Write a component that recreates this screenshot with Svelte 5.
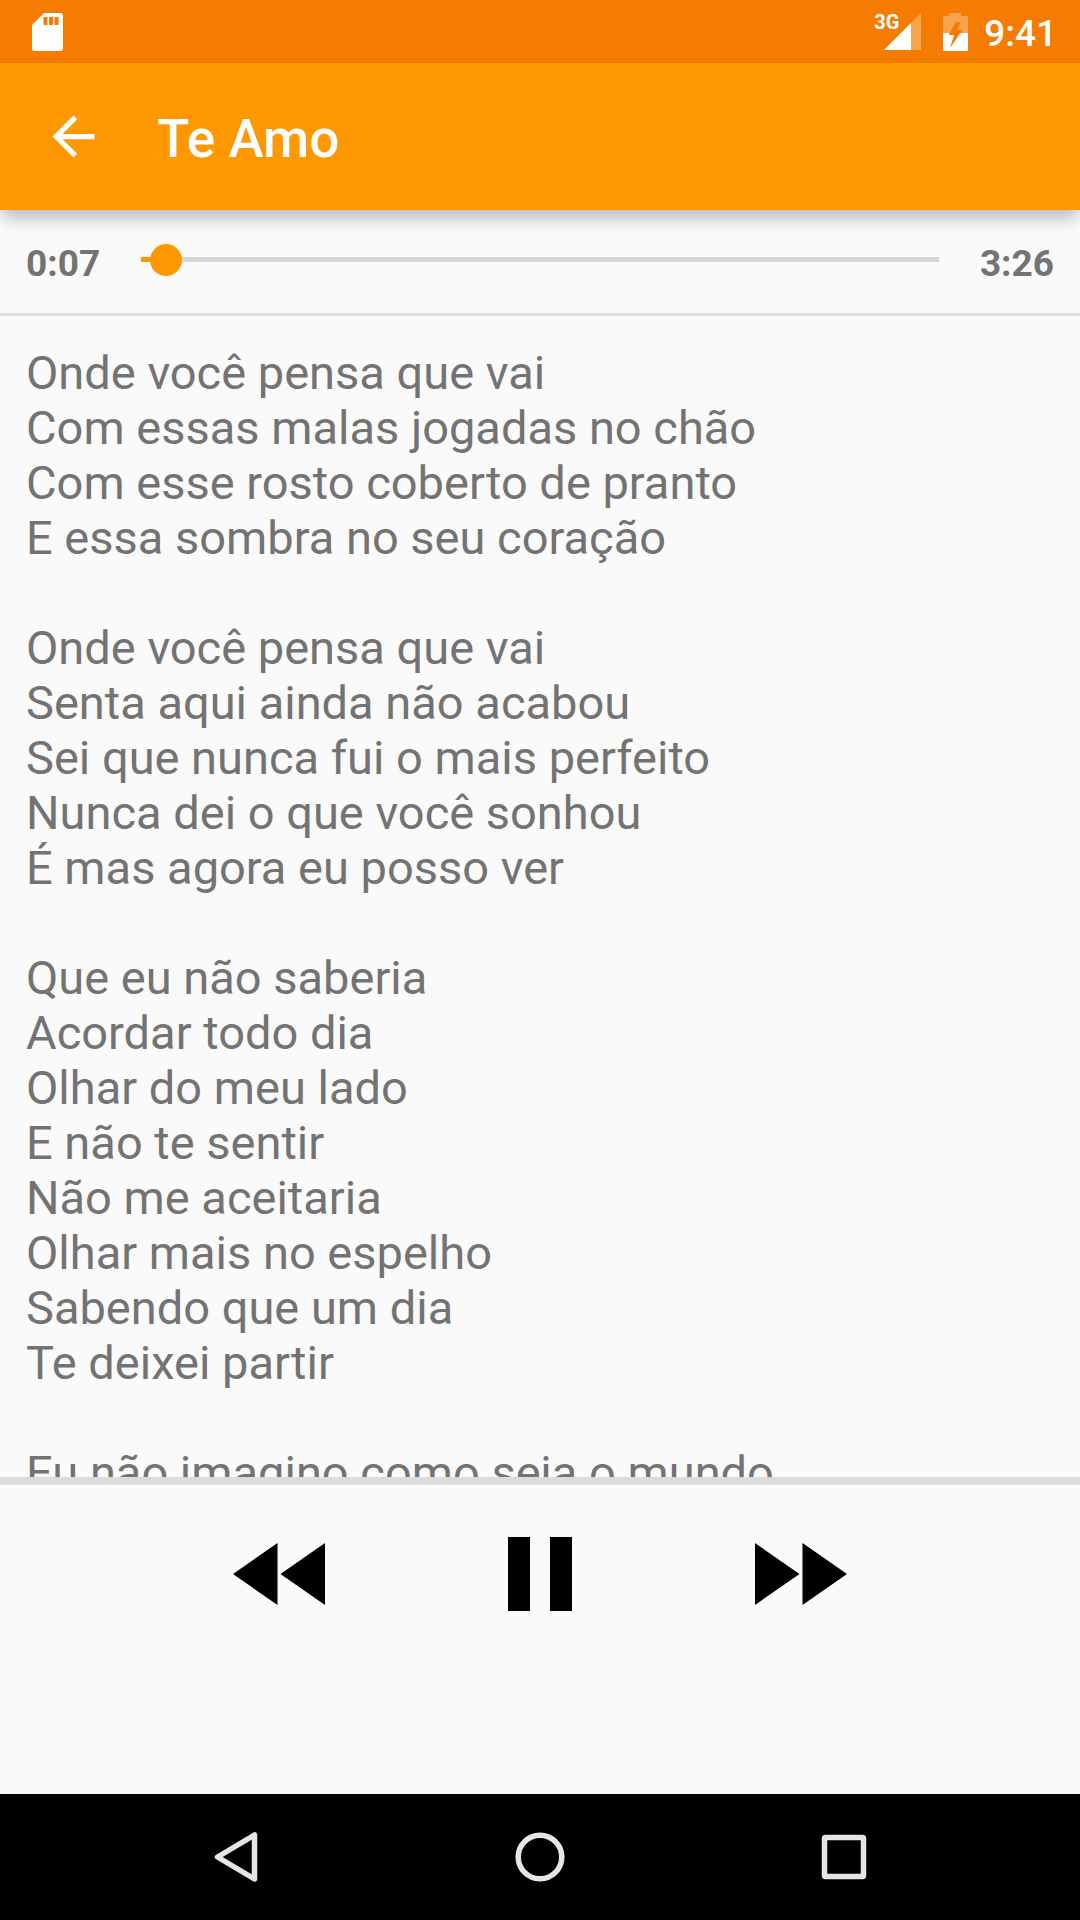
<script>
  // playback state, in seconds
  let position = $state(6.4);
  let duration = $state(206);
  let playing = $state(true);

  const title = 'Te Amo';

  const verses = [
    [
      'Onde você pensa que vai',
      'Com essas malas jogadas no chão',
      'Com esse rosto coberto de pranto',
      'E essa sombra no seu coração'
    ],
    [
      'Onde você pensa que vai',
      'Senta aqui ainda não acabou',
      'Sei que nunca fui o mais perfeito',
      'Nunca dei o que você sonhou',
      'É mas agora eu posso ver'
    ],
    [
      'Que eu não saberia',
      'Acordar todo dia',
      'Olhar do meu lado',
      'E não te sentir',
      'Não me aceitaria',
      'Olhar mais no espelho',
      'Sabendo que um dia',
      'Te deixei partir'
    ],
    ['Eu não imagino como seja o mundo']
  ];

  let progress = $derived((position / duration) * 100);

  function formatTime(value) {
    const total = Math.ceil(value);
    return `${Math.floor(total / 60)}:${String(total % 60).padStart(2, '0')}`;
  }

  function seek(delta) {
    position = Math.min(duration, Math.max(0, position + delta));
  }
</script>

<div class="screen">
  <div class="status-bar">
    <svg class="sd" width="31" height="38" viewBox="0 0 31 38">
      <path fill="#fff" fill-rule="evenodd" d="M12 0H28a3 3 0 0 1 3 3V35a3 3 0 0 1-3 3H3a3 3 0 0 1-3-3V12ZM11.500 4v8h4V4ZM17 4v8h4V4ZM22.500 4v8h4V4Z" />
    </svg>
    <div class="status-right">
      <div class="status-icons">
        <div class="signal">
          <span class="network">3G</span>
          <svg width="37" height="37" viewBox="0 0 37 37">
            <path fill="#fff" fill-opacity="0.3" d="M37 0V37H27V10Z" />
            <path fill="#fff" d="M27 10V37H0Z" />
          </svg>
        </div>
        <svg width="25" height="38" viewBox="0 0 25 38">
          <path fill="#fff" fill-opacity="0.3" fill-rule="evenodd" d="M6 0H18V3H25V20H17.500L19.500 17H14L18 9H13L6.500 20H0V3H6Z" />
          <path fill="#fff" d="M0 20H6.500L6 22H11L7 35L17.500 20H25V38H0Z" />
        </svg>
      </div>
      <time class="clock">9:41</time>
    </div>
  </div>

  <header class="app-bar">
    <button class="back" aria-label="Voltar">
      <svg width="63" height="63" viewBox="0 0 24 24">
        <path fill="#fff" d="M20 11H7.830l5.590-5.590L12 4l-8 8 8 8 1.410-1.410L7.830 13H20z" />
      </svg>
    </button>
    <h1>{title}</h1>
  </header>

  <div class="seek-row">
    <span class="time">{formatTime(position)}</span>
    <input
      type="range"
      min="0"
      max={duration}
      step="any"
      bind:value={position}
      aria-label="Posição"
      style="--progress: {progress}%"
    />
    <span class="time">{formatTime(duration)}</span>
  </div>

  <main class="lyrics">
    {#each verses as verse}
      <p>
        {#each verse as line}
          <span>{line}</span>
        {/each}
      </p>
    {/each}
  </main>

  <div class="controls">
    <button aria-label="Retroceder" onclick={() => seek(-10)}>
      <svg width="92" height="62" viewBox="0 0 92 62">
        <path d="M44.500 0V62L0 31ZM92 0V62L47.500 31Z" />
      </svg>
    </button>
    <button aria-label={playing ? 'Pausar' : 'Tocar'} onclick={() => (playing = !playing)}>
      <svg width="64" height="74" viewBox="0 0 64 74">
        {#if playing}
          <path d="M0 0H22V74H0ZM42 0H64V74H42Z" />
        {:else}
          <path d="M4 0L62 37L4 74Z" />
        {/if}
      </svg>
    </button>
    <button aria-label="Avançar" onclick={() => seek(10)}>
      <svg width="92" height="62" viewBox="0 0 92 62">
        <path d="M0 0L44.500 31L0 62ZM47.500 0L92 31L47.500 62Z" />
      </svg>
    </button>
  </div>

  <nav class="nav-bar">
    <button aria-label="Voltar">
      <svg width="50" height="50" viewBox="0 0 50 50">
        <path d="M43.500 3V47L6.500 25Z" />
      </svg>
    </button>
    <button aria-label="Início">
      <svg width="50" height="50" viewBox="0 0 50 50">
        <circle cx="25" cy="25" r="21.800" />
      </svg>
    </button>
    <button aria-label="Recentes">
      <svg width="50" height="50" viewBox="0 0 50 50">
        <rect x="5.500" y="5.500" width="39" height="39" rx="1" />
      </svg>
    </button>
  </nav>
</div>

<style>
  :global(body) {
    margin: 0;
    background: #fafafa;
  }

  .screen {
    display: flex;
    flex-direction: column;
    height: 100vh;
    background: #fafafa;
    color: #737373;
    font-family: Roboto, 'Noto Sans', sans-serif;
  }

  button {
    display: flex;
    align-items: center;
    justify-content: center;
    padding: 0;
    border: 0;
    background: none;
    cursor: pointer;
  }

  svg {
    display: block;
  }

  .status-bar {
    display: flex;
    align-items: center;
    justify-content: space-between;
    flex: none;
    height: 63px;
    padding: 0 23px 0 32px;
    background: #f57c00;
    color: #fff;
  }

  .status-right {
    display: flex;
    align-items: center;
    gap: 16px;
  }

  .status-icons {
    display: flex;
    align-items: center;
    gap: 22px;
  }

  .signal {
    position: relative;
  }

  .network {
    position: absolute;
    top: -1px;
    left: -10px;
    font-size: 20px;
    font-weight: 700;
    line-height: 20px;
  }

  .clock {
    padding-top: 4px;
    font-size: 37px;
    font-weight: 500;
    line-height: 44px;
  }

  .app-bar {
    position: relative;
    display: flex;
    align-items: center;
    gap: 52px;
    flex: none;
    height: 147px;
    padding: 0 42px;
    background: #ff9800;
    box-shadow: 0 10px 16px -2px rgba(0, 0, 0, 0.26);
  }

  h1 {
    margin: 0;
    padding-top: 4px;
    color: #fff;
    font-size: 53px;
    font-weight: 500;
    line-height: 62px;
  }

  .seek-row {
    display: flex;
    align-items: center;
    gap: 25px;
    flex: none;
    box-sizing: border-box;
    height: 106px;
    padding: 0 26px 4px;
    border-bottom: 3px solid #dcdcdc;
  }

  .time {
    padding-top: 8px;
    font-size: 37px;
    font-weight: 700;
    line-height: 44px;
  }

  /* the track is inset by half a thumb on both ends */
  input[type='range'] {
    flex: 1;
    min-width: 0;
    height: 32px;
    margin: 0;
    padding: 0;
    appearance: none;
    background:
      linear-gradient(
          to right,
          #ff9800 var(--progress),
          #d6d6d6 var(--progress)
        )
        center / calc(100% - 32px) 5px no-repeat;
    cursor: pointer;
  }

  input[type='range']::-webkit-slider-thumb {
    appearance: none;
    width: 32px;
    height: 32px;
    border: 0;
    border-radius: 50%;
    background: #ff9800;
  }

  .lyrics {
    flex: 1;
    min-height: 0;
    padding: 29px 26px 0;
    overflow-y: auto;
    scrollbar-width: none;
    font-size: 47px;
    line-height: 55px;
  }

  .lyrics p {
    margin: 0 0 55px;
  }

  .lyrics span {
    display: block;
  }

  .controls {
    display: flex;
    align-items: flex-start;
    flex: none;
    box-sizing: border-box;
    height: 317px;
    padding: 52px 149px 0;
    border-top: 8px solid #dcdcdc;
  }

  .controls button {
    flex: 1;
    height: 74px;
  }

  .nav-bar {
    display: flex;
    flex: none;
    height: 126px;
    padding: 0 84px;
    background: #000;
  }

  .nav-bar button {
    flex: 1;
  }

  .nav-bar svg {
    fill: none;
    stroke: #e6e6e6;
    stroke-width: 5.5;
    stroke-linejoin: round;
  }
</style>
